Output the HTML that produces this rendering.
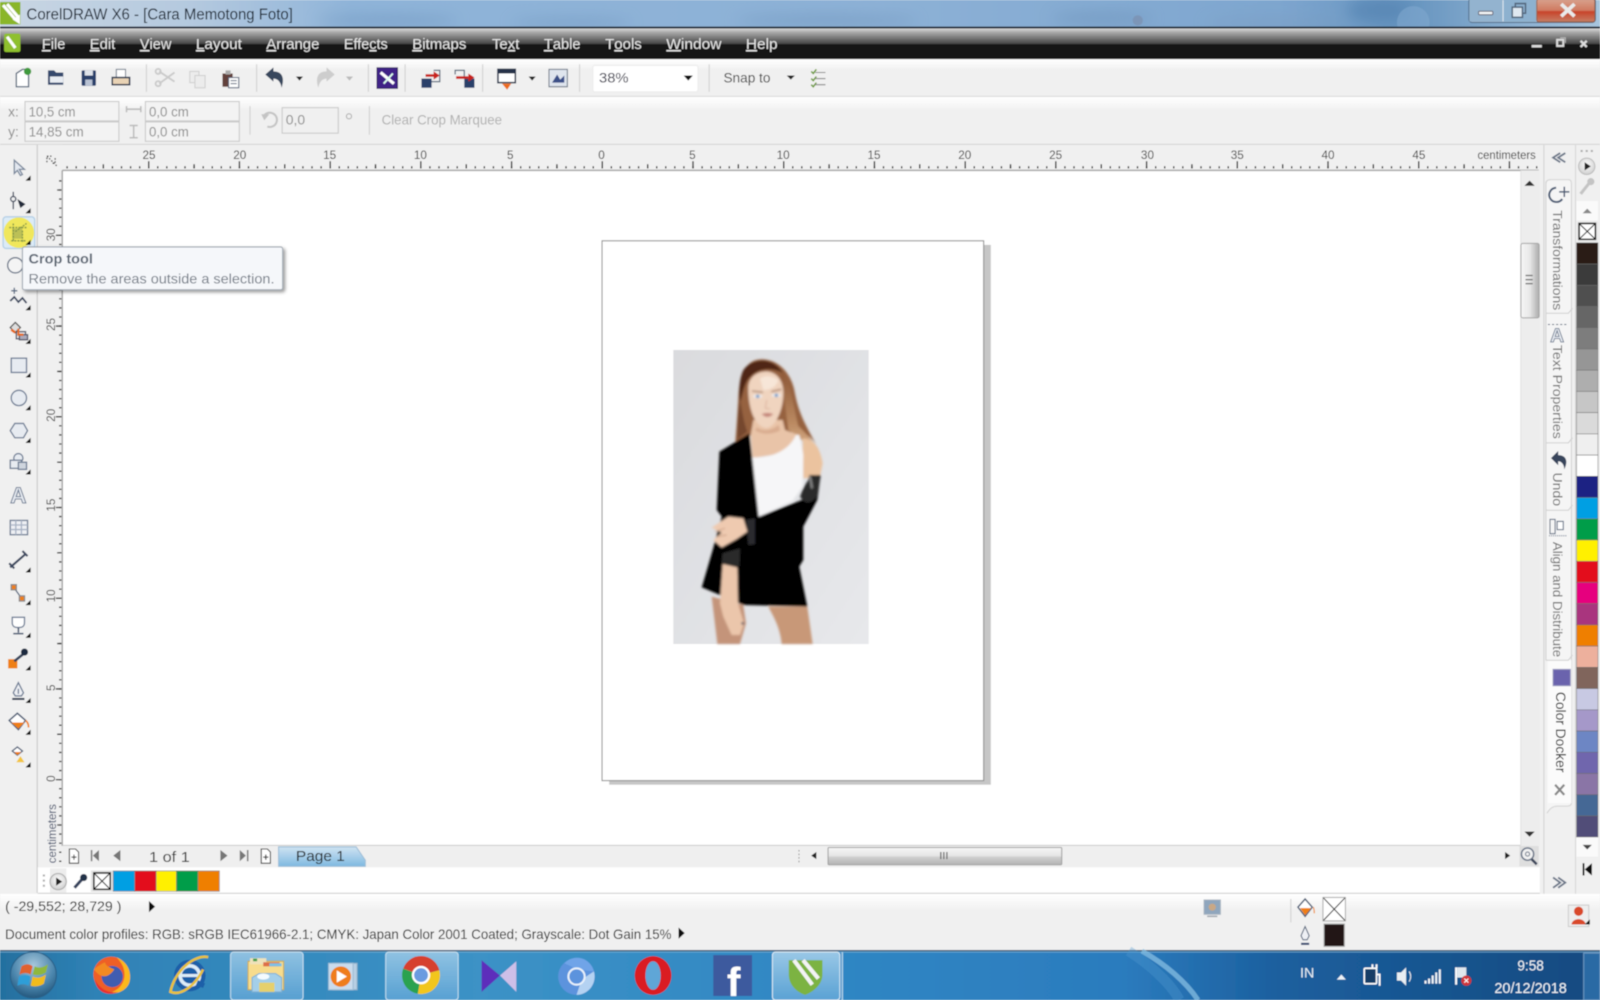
<!DOCTYPE html>
<html><head><meta charset="utf-8"><title>CorelDRAW X6</title>
<style>html,body{margin:0;padding:0;width:1600px;height:1000px;overflow:hidden;background:#f0f0f0}svg{display:block}text{font-family:"Liberation Sans",sans-serif}</style></head>
<body>
<svg xmlns="http://www.w3.org/2000/svg" width="1600" height="1000" viewBox="0 0 1568 980">
<defs>
<linearGradient id="tb" x1="0" x2="1" y1="0" y2="0"><stop offset="0" stop-color="#c9d6e3"/><stop offset=".12" stop-color="#b4c9df"/><stop offset=".22" stop-color="#8fb4d9"/><stop offset=".55" stop-color="#8db1d6"/><stop offset=".8" stop-color="#7ea6cf"/><stop offset=".88" stop-color="#6694bf"/><stop offset="1" stop-color="#a8c5de"/></linearGradient>
<linearGradient id="mb" x1="0" x2="0" y1="0" y2="1"><stop offset="0" stop-color="#d8d8d8"/><stop offset=".12" stop-color="#aaa"/><stop offset=".5" stop-color="#444"/><stop offset=".52" stop-color="#171717"/><stop offset="1" stop-color="#171717"/></linearGradient>
<linearGradient id="bar" x1="0" x2="0" y1="0" y2="1"><stop offset="0" stop-color="#fff"/><stop offset=".3" stop-color="#f0f0f0"/><stop offset="1" stop-color="#f0f0f0"/></linearGradient>
<linearGradient id="thumb" x1="0" x2="0" y1="0" y2="1"><stop offset="0" stop-color="#f6f6f6"/><stop offset=".5" stop-color="#e4e4e4"/><stop offset=".55" stop-color="#cfcfcf"/><stop offset="1" stop-color="#b4b4b4"/></linearGradient>
<linearGradient id="thumbv" x1="0" x2="1" y1="0" y2="0"><stop offset="0" stop-color="#f8f8f8"/><stop offset=".5" stop-color="#e6e6e6"/><stop offset="1" stop-color="#aaa"/></linearGradient>
<linearGradient id="tabg" x1="0" x2="0" y1="0" y2="1"><stop offset="0" stop-color="#cfe3f2"/><stop offset="1" stop-color="#7fb9e0"/></linearGradient>
<linearGradient id="task" x1="0" x2="1" y1="0" y2="0"><stop offset="0" stop-color="#24709f"/><stop offset=".06" stop-color="#2f82b6"/><stop offset=".3" stop-color="#3c92c6"/><stop offset=".53" stop-color="#2f86c3"/><stop offset=".7" stop-color="#2c7cbe"/><stop offset=".8" stop-color="#1b5f9e"/><stop offset="1" stop-color="#164a80"/></linearGradient>
<linearGradient id="act" x1="0" x2="0" y1="0" y2="1"><stop offset="0" stop-color="#9fcbe8" stop-opacity=".95"/><stop offset="1" stop-color="#5fa5d6" stop-opacity=".9"/></linearGradient>
<linearGradient id="close" x1="0" x2="0" y1="0" y2="1"><stop offset="0" stop-color="#d9a38f"/><stop offset=".5" stop-color="#cf7a60"/><stop offset=".55" stop-color="#c8432a"/><stop offset="1" stop-color="#c77f66"/></linearGradient>
<radialGradient id="orb" cx=".5" cy=".3" r=".75"><stop offset="0" stop-color="#a9c8dc"/><stop offset=".6" stop-color="#4b86ad"/><stop offset="1" stop-color="#1d5075"/></radialGradient>
<radialGradient id="btn" cx=".5" cy=".4" r=".6"><stop offset="0" stop-color="#fff"/><stop offset="1" stop-color="#cfcfcf"/></radialGradient>
<linearGradient id="photobg" x1="0" x2="1" y1="0" y2="1"><stop offset="0" stop-color="#dadbde"/><stop offset="1" stop-color="#e7e8eb"/></linearGradient>
<linearGradient id="hairR" x1="0" x2="0" y1="0" y2="1"><stop offset="0" stop-color="#8a5535"/><stop offset=".55" stop-color="#b98860"/><stop offset="1" stop-color="#e8c29f"/></linearGradient>
<filter id="soft" x="-2%" y="-2%" width="104%" height="104%"><feGaussianBlur stdDeviation=".45"/></filter>
<filter id="b3" x="-20%" y="-20%" width="140%" height="140%"><feGaussianBlur stdDeviation="3"/></filter>
<filter id="b8" x="-50%" y="-100%" width="200%" height="300%"><feGaussianBlur stdDeviation="7"/></filter>
<filter id="tip" x="-5%" y="-20%" width="110%" height="140%"><feDropShadow dx="2" dy="2" stdDeviation="1.5" flood-color="#000" flood-opacity=".4"/></filter>
<polygon id="fly" points="7,12 12,12 12,7" fill="#111"/>
</defs>

<rect width="1568" height="980" fill="#f0f0f0"/>
<g filter="url(#soft)">

<!-- title bar -->
<rect width="1568" height="26" fill="url(#tb)"/>
<g filter="url(#b8)" opacity=".6">
<ellipse cx="380" cy="20" rx="70" ry="5" fill="#6e94bc"/><ellipse cx="560" cy="22" rx="60" ry="4" fill="#6e94bc"/><ellipse cx="810" cy="20" rx="90" ry="5" fill="#6e94bc"/><ellipse cx="1080" cy="18" rx="50" ry="6" fill="#6e94bc"/><ellipse cx="1250" cy="22" rx="70" ry="4" fill="#7a9bbf"/><ellipse cx="1350" cy="10" rx="30" ry="12" fill="#4f7fae"/>
</g>
<circle cx="1385" cy="22" r="16" fill="#82a9cf" opacity=".55"/><circle cx="1115" cy="20" r="5" fill="#7b7f98" opacity=".4"/>
<rect y="26" width="1568" height="2" fill="#1f2a3a"/>
<rect x="0" y="2" width="20" height="22" fill="#8ab62c"/><path d="M3 5L15 19M7 4L18 17M15 19L18 17L18 21Z" stroke="#fff" stroke-width="3" fill="none"/>
<text x="26" y="19" font-size="15" fill="#15202e" textLength="261" lengthAdjust="spacingAndGlyphs">CorelDRAW X6 - [Cara Memotong Foto]</text>
<!-- window buttons -->
<rect x="1439.5" y="-2" width="124" height="24" rx="3" fill="#9db8d0" stroke="#4f6a86"/>
<rect x="1440" y="-2" width="33" height="23" fill="#93b3cf"/><rect x="1473" y="-2" width="33" height="23" fill="#8db1cf"/>
<path d="M1473 0V21M1506 0V21" stroke="#e0e8f0"/>
<rect x="1506" y="-1" width="57" height="22.5" rx="2" fill="url(#close)" stroke="#8d6050"/>
<rect x="1449" y="11" width="14" height="3.500" rx="1" fill="#f4f6f8" stroke="#667"/>
<rect x="1482" y="7" width="10" height="10" fill="#dfe8f0" stroke="#52667c" stroke-width="1.500"/><path d="M1485 7V3.500H1495V13H1492" fill="none" stroke="#52667c" stroke-width="1.500"/>
<path d="M1530 4L1543 16M1543 4L1530 16" stroke="#eaeaea" stroke-width="3.600"/>

<!-- menu bar -->
<rect y="28" width="1568" height="30" fill="url(#mb)"/>
<rect x="4" y="33" width="16" height="18" rx="2" fill="#8fc02f"/><path d="M7 36L15 47" stroke="#fff" stroke-width="3"/>
<g font-size="14.5" fill="#e6e6e6">
<text x="41" y="48" textLength="23" lengthAdjust="spacingAndGlyphs"><tspan text-decoration="underline">F</tspan>ile</text>
<text x="88" y="48" textLength="25" lengthAdjust="spacingAndGlyphs"><tspan text-decoration="underline">E</tspan>dit</text>
<text x="137" y="48" textLength="31" lengthAdjust="spacingAndGlyphs"><tspan text-decoration="underline">V</tspan>iew</text>
<text x="192" y="48" textLength="45" lengthAdjust="spacingAndGlyphs"><tspan text-decoration="underline">L</tspan>ayout</text>
<text x="261" y="48" textLength="52" lengthAdjust="spacingAndGlyphs"><tspan text-decoration="underline">A</tspan>rrange</text>
<text x="337" y="48" textLength="43" lengthAdjust="spacingAndGlyphs">Effe<tspan text-decoration="underline">c</tspan>ts</text>
<text x="404" y="48" textLength="53" lengthAdjust="spacingAndGlyphs"><tspan text-decoration="underline">B</tspan>itmaps</text>
<text x="482" y="48" textLength="27" lengthAdjust="spacingAndGlyphs">Te<tspan text-decoration="underline">x</tspan>t</text>
<text x="533" y="48" textLength="36" lengthAdjust="spacingAndGlyphs"><tspan text-decoration="underline">T</tspan>able</text>
<text x="593" y="48" textLength="36" lengthAdjust="spacingAndGlyphs">T<tspan text-decoration="underline">o</tspan>ols</text>
<text x="653" y="48" textLength="54" lengthAdjust="spacingAndGlyphs"><tspan text-decoration="underline">W</tspan>indow</text>
<text x="731" y="48" textLength="31" lengthAdjust="spacingAndGlyphs"><tspan text-decoration="underline">H</tspan>elp</text>
</g>
<rect x="1501" y="44" width="10" height="2.5" fill="#ddd"/>
<rect x="1526" y="39" width="6" height="6" fill="none" stroke="#ddd" stroke-width="2"/><path d="M1529 37H1534V42" fill="none" stroke="#bbb"/>
<path d="M1549 40L1555 46M1555 40L1549 46" stroke="#ddd" stroke-width="2.2"/>

<!-- standard toolbar -->
<rect y="58" width="1568" height="36" fill="url(#bar)"/>
<rect y="94" width="1568" height="1" fill="#d8d8d8"/>
<path d="M16 72L22 68H28V85H16Z" fill="#fff" stroke="#5b6a7e" stroke-width="1.300"/><circle cx="27" cy="70" r="3.600" fill="#3f9a3c"/>
<path d="M47 83V69H53L55 71H62V83Z" fill="#34496d"/><path d="M49 75H62V81H49Z" fill="#e9edf3"/>
<rect x="80" y="69" width="14" height="15" rx="1" fill="#2c3f6b"/><rect x="83" y="69" width="8" height="5" fill="#dfe3ea"/><rect x="83.500" y="78" width="7" height="6" fill="#b9c2d3"/>
<rect x="114" y="68" width="9" height="9" fill="#fff" stroke="#6f7a8a"/><rect x="110" y="76" width="17" height="7" fill="#e9d3b5" stroke="#28354d" stroke-width="1.500"/>
<path d="M143.500 63V90" stroke="#cfcfcf"/>
<g fill="none" stroke="#cacaca" stroke-width="1.800"><path d="M156 70L171 80M156 82L171 71"/><circle cx="155" cy="70" r="2.500"/><circle cx="155" cy="82" r="2.500"/></g>
<g fill="#ececec" stroke="#cfcfcf"><rect x="186" y="70" width="9" height="11"/><rect x="191" y="74" width="10" height="12"/></g>
<rect x="218" y="72" width="10" height="13" fill="#62403a"/><rect x="221" y="69" width="5" height="4" fill="#aaa"/><rect x="224" y="76" width="10" height="10" fill="#fff" stroke="#59647a"/><path d="M226 79H232M226 82H232" stroke="#59647a"/>
<path d="M251.500 63V90" stroke="#cfcfcf"/>
<path d="M260 73L268 66V70C277 70 279 77 276 86C275 80 272 77 268 77V80Z" fill="#39465d"/>
<polygon points="290,75 297,75 293.500,79" fill="#222"/>
<path d="M328 73L320 66V70C311 70 309 77 312 86C313 80 316 77 320 77V80Z" fill="#cdcdcd"/>
<polygon points="339,75 346,75 342.500,79" fill="#bbb"/>
<path d="M361 63V90" stroke="#cfcfcf"/>
<rect x="369.500" y="66.500" width="20" height="20" fill="#3f2387" stroke="#2c1a60"/><path d="M373 71L386 82" stroke="#fff" stroke-width="3"/><path d="M376 82L385 72" stroke="#dfe" stroke-width="1.800"/>
<path d="M397 63V90" stroke="#cfcfcf"/>
<path d="M425 69H431V80H416" fill="none" stroke="#5b6a7e" stroke-width="1.200"/><rect x="413" y="77" width="10" height="9" fill="#2c3f6b"/><path d="M417 74H427" stroke="#c8201e" stroke-width="2.500"/><polygon points="425,70 431,74 425,78" fill="#c8201e"/>
<path d="M446 73V69H455V76" fill="none" stroke="#5b6a7e" stroke-width="1.200"/><rect x="455" y="77" width="10" height="9" fill="#2c3f6b"/><path d="M447 76H459" stroke="#c8201e" stroke-width="2.500"/><polygon points="459,72 465,76 459,80" fill="#c8201e"/>
<path d="M473 63V90" stroke="#cfcfcf"/>
<rect x="488" y="68" width="17" height="13" fill="#fff" stroke="#263349" stroke-width="1.500"/><rect x="488" y="68" width="17" height="4" fill="#263349"/><polygon points="492,82 501,82 497,88" fill="#ec6c1f"/>
<polygon points="518,75 525,75 521.500,79" fill="#222"/>
<rect x="538" y="68" width="18" height="17" fill="#dfe5ee" stroke="#6a7484"/><path d="M541 81L546 73L549 78L553 74V81Z" fill="#3b4f88"/>
<path d="M568 63V90" stroke="#cfcfcf"/>
<rect x="581" y="64" width="103" height="26" rx="2" fill="#fff" stroke="#ececec"/>
<text x="587" y="81" font-size="14" fill="#334" textLength="29" lengthAdjust="spacingAndGlyphs">38%</text>
<polygon points="670,74 679,74 674.500,79" fill="#111"/>
<path d="M695 63V90" stroke="#cfcfcf"/>
<text x="709" y="81" font-size="14" fill="#444" textLength="46" lengthAdjust="spacingAndGlyphs">Snap to</text>
<polygon points="771,74 779,74 775,78" fill="#222"/>
<path d="M795 70L797 72L800 68M795 77L797 79L800 75M795 83L797 85L800 81" fill="none" stroke="#6c9c38" stroke-width="1.500"/><path d="M799 71H809M799 77H809M799 83H809" stroke="#888"/>

<!-- property bar -->
<rect y="95" width="1568" height="46" fill="url(#bar)"/>
<rect y="141" width="1568" height="1" fill="#d2d2d2"/>
<text x="8" y="114" font-size="13.500" fill="#8a8a8a">x:</text>
<text x="8" y="134" font-size="13.500" fill="#8a8a8a">y:</text>
<g fill="#f3f3f3" stroke="#c8c8c8"><rect x="24.500" y="99.500" width="92" height="19"/><rect x="24.500" y="119.500" width="92" height="19"/><rect x="142.500" y="99.500" width="92" height="19"/><rect x="142.500" y="119.500" width="92" height="19"/><rect x="276.500" y="105.500" width="55" height="25" fill="#f0f0f0"/></g>
<g font-size="13.500" fill="#8d8d8d">
<text x="28" y="114" textLength="46" lengthAdjust="spacingAndGlyphs">10,5 cm</text>
<text x="28" y="134" textLength="54" lengthAdjust="spacingAndGlyphs">14,85 cm</text>
<text x="146" y="114" textLength="39" lengthAdjust="spacingAndGlyphs">0,0 cm</text>
<text x="146" y="134" textLength="39" lengthAdjust="spacingAndGlyphs">0,0 cm</text>
<text x="280" y="122" textLength="19" lengthAdjust="spacingAndGlyphs">0,0</text>
</g>
<path d="M124 107H138M124 104V110M138 104V110" stroke="#bbb" stroke-width="1.500" fill="none"/>
<path d="M131 123V135M127 123H135M127 135H135" stroke="#bbb" stroke-width="1.500" fill="none"/>
<path d="M259 113A7 7 0 1 1 262 124" fill="none" stroke="#c4c4c4" stroke-width="2"/><polygon points="256,112 264,112 259,118" fill="#c4c4c4"/>
<circle cx="342" cy="114" r="2.500" fill="none" stroke="#aaa"/>
<path d="M245 104V132M362 104V132" stroke="#cfcfcf"/>
<text x="374" y="122" font-size="13.500" fill="#b0b0b0" textLength="118" lengthAdjust="spacingAndGlyphs">Clear Crop Marquee</text>

<!-- canvas -->
<rect x="61" y="167" width="1430" height="662" fill="#fff"/>
<!-- page -->
<rect x="597" y="240" width="374" height="529" fill="#c6c6c6"/>
<rect x="590" y="236" width="374" height="529" fill="#fff" stroke="#8c8c8c"/>

<!-- photo -->
<g transform="translate(646.800,333.200) scale(.32667)">
<rect x="40" y="30" width="586" height="882" fill="url(#photobg)"/>
<g filter="url(#b3)">
<path d="M300 58C255 60 238 110 235 170C232 230 228 280 226 305L275 285L420 275C445 285 465 300 478 335C455 280 420 240 405 160C395 95 350 55 300 58Z" fill="#96623f"/>
<path d="M362 88C395 130 400 200 415 258C445 288 472 312 486 372L432 305C405 285 395 275 385 270Z" fill="url(#hairR)"/>
<path d="M250 90C275 52 342 50 368 98C330 80 290 85 264 118C250 140 246 170 240 190C235 150 238 115 250 90Z" fill="#4f2819"/>
<path d="M240 175C245 210 252 250 262 275L232 298C232 255 233 215 240 175Z" fill="#74462e"/>
<path d="M280 240L368 240L375 270L415 285L428 330L278 354L272 285Z" fill="#e9c4a8"/>
<path d="M265 140C268 105 300 92 325 95C355 100 370 125 370 160C370 200 352 258 320 264C288 262 264 215 265 140Z" fill="#f0d4bf"/>
<path d="M300 115Q325 100 355 120Q345 150 310 150Z" fill="#f7e6d8"/>
<path d="M290 262Q320 282 356 255L360 272Q320 290 286 272Z" fill="#d9ac8f"/>
<ellipse cx="293" cy="169" rx="14" ry="5" fill="#eef0f2"/><ellipse cx="349" cy="166" rx="14" ry="5" fill="#eef0f2"/>
<circle cx="293" cy="169" r="5" fill="#5f93c6"/><circle cx="349" cy="166" r="5" fill="#5f93c6"/>
<path d="M276 153L309 157M334 155L364 148" stroke="#a2775e" stroke-width="4"/>
<path d="M320 180L316 205L330 207" stroke="#d8b09a" stroke-width="3" fill="none"/>
<path d="M305 222Q322 215 340 222Q322 240 305 222Z" fill="#c5867a"/>
<path d="M428 295C458 295 480 320 488 370L480 410L430 415Z" fill="#ebc39f"/>
<path d="M408 285L418 285L430 345L428 440L398 482L296 530L276 352C330 355 385 335 408 285Z" fill="#f6f6f8"/>
<path d="M155 770L250 795L258 850L240 912H172Z" fill="#c4947a"/>
<path d="M325 800H442L458 912H365C360 860 340 830 325 800Z" fill="#c89878"/>
<path d="M178 335L268 280L277 355L296 530L430 478L440 440L448 405L482 405L472 480L430 560L430 660L418 680L442 800L250 795L125 742L160 622L185 530L170 510Z" fill="#060606"/>
<path d="M420 470C430 440 440 420 465 405L482 410L470 470C455 490 435 495 420 470Z" fill="#2a2a2c"/>
<path d="M450 408L456 445" stroke="#999" stroke-width="5"/>
<path d="M258 540L285 535L285 612L265 615Z" fill="#2c2c2e"/>
<path d="M188 640L240 625L238 680L185 670Z" fill="#2a2a2c"/>
<path d="M155 563L205 530L250 535L262 575L230 597L185 622L160 600L185 578Z" fill="#efcab0"/>
<path d="M165 575L195 565M170 590L200 585" stroke="#c59a80" stroke-width="3"/>
<path d="M188 672L232 682L234 790L252 850L240 885L215 885L190 830L180 790Z" fill="#ebc6ab"/>
<circle cx="248" cy="850" r="4" fill="#556"/>
</g>
</g>

<!-- rulers bg -->
<rect x="37" y="142" width="1471" height="25" fill="#f0f0f0"/>
<rect x="37" y="142" width="24" height="707" fill="#f0f0f0"/>
<rect x="0" y="142" width="36" height="790" fill="#f0f0f0"/>
<rect x="36" y="142" width="1" height="733" fill="#c4c4c4"/>
<path d="M61 167H1508" stroke="#a8a8a8" stroke-width="1.500"/>
<path d="M61 167V829" stroke="#a8a8a8" stroke-width="1.500"/>
<g stroke="#222" fill="none">
<line x1="65.090" y1="164" x2="1507" y2="164" stroke-width="2.200" stroke-dasharray="1.300 7.590"/>
<line x1="100.650" y1="163" x2="1507" y2="163" stroke-width="4" stroke-dasharray="1.300 87.600"/>
<line x1="145.100" y1="161.500" x2="1507" y2="161.500" stroke-width="7" stroke-dasharray="1.300 87.600"/>
<line x1="59" y1="176.660" x2="59" y2="846" stroke-width="2.200" stroke-dasharray="1.300 7.590"/>
<line x1="58" y1="185.550" x2="58" y2="846" stroke-width="4" stroke-dasharray="1.300 87.600"/>
<line x1="57.500" y1="230" x2="57.500" y2="846" stroke-width="5.500" stroke-dasharray="1.300 87.600"/>
</g>
<g font-size="11.500" fill="#3d3d3d" text-anchor="middle">
<text x="146" y="156">25</text><text x="235" y="156">20</text><text x="323" y="156">15</text><text x="412" y="156">10</text><text x="500" y="156">5</text><text x="589.500" y="156">0</text><text x="678.500" y="156">5</text><text x="767.500" y="156">10</text><text x="856.500" y="156">15</text><text x="945.500" y="156">20</text><text x="1034.500" y="156">25</text><text x="1124.500" y="156">30</text><text x="1212.500" y="156">35</text><text x="1301.500" y="156">40</text><text x="1390.500" y="156">45</text>
<text transform="translate(54,230) rotate(-90)">30</text><text transform="translate(54,318) rotate(-90)">25</text><text transform="translate(54,407) rotate(-90)">20</text><text transform="translate(54,495) rotate(-90)">15</text><text transform="translate(54,584) rotate(-90)">10</text><text transform="translate(54,674) rotate(-90)">5</text><text transform="translate(54,763) rotate(-90)">0</text>
</g>
<text x="1448" y="156" font-size="11.500" fill="#3d3d3d" textLength="57" lengthAdjust="spacingAndGlyphs">centimeters</text>
<text transform="translate(55,846) rotate(-90)" font-size="11.500" fill="#3d4a66" textLength="58" lengthAdjust="spacingAndGlyphs">centimeters</text>
<path d="M46 153L56 163M46 159L46 153L52 153M54 155L54 160L50 160" stroke="#333" stroke-dasharray="1.500 1.500" fill="none" stroke-width="1.200"/>

<!-- toolbox -->
<g stroke-width="1.300">
<g transform="translate(18,165)"><path d="M-4 -8L-4 5L-1 2L2 7L4 6L1 1L6 1Z" fill="#e3e8f0" stroke="#7a889c"/><use href="#fly"/></g>
<g transform="translate(18,197)"><path d="M-5 -9V8" stroke="#444e60" fill="none"/><circle cx="-5" cy="-2" r="2.500" fill="#eee" stroke="#444e60"/><polygon points="-1,-2 7,3 2,7" fill="#222b3b"/><use href="#fly"/></g>
<g transform="translate(18,228)"><rect x="-15" y="-15.500" width="31" height="31" rx="3" fill="#dcebf7" stroke="#b5d0e6"/><circle cx="0.500" r="15" fill="#f0e75c"/><rect x="-6" y="-4" width="10" height="10" fill="#bcc057"/><path d="M-9 -5H8M-5 -9V8M4 -2V9M-7 8H8M-3 -1L8 -9" stroke="#7f9448" fill="none" stroke-dasharray="2 1"/><use href="#fly"/></g>
<circle cx="15" cy="260" r="7.500" fill="#f4f4f4" stroke="#6b7688"/>
<g transform="translate(18,292)"><path d="M-7 -7H-1M-4 -10V-4" stroke="#5a6a82"/><path d="M-8 3L-4 -1L0 4L4 0L8 5" fill="none" stroke="#3d4860" stroke-width="1.800"/><use href="#fly"/></g>
<g transform="translate(18,325)"><path d="M-8 -4L-3 -9L2 -4L-3 1Z" fill="#ddd" stroke="#555"/><path d="M-7 -2L-3 1" stroke="#e66b1f" stroke-width="2.500"/><rect x="-2" y="0" width="9" height="7" fill="#e3e6ea" stroke="#556"/><rect x="1" y="3" width="8" height="5" fill="#aab" stroke="#556"/><path d="M0 -3V3H5" stroke="#e66b1f" stroke-width="2" fill="none"/><use href="#fly"/></g>
<g transform="translate(18,358)"><rect x="-7" y="-7" width="15" height="14" fill="#e7ebf1" stroke="#6e7d94"/><use href="#fly"/></g>
<g transform="translate(18,390)"><circle cx="0.500" r="7.500" fill="#e7ebf1" stroke="#6e7d94"/><use href="#fly"/></g>
<g transform="translate(18,422)"><polygon points="-8,0 -3.500,-7 5,-7 9,0 5,7 -3.500,7" fill="#e7ebf1" stroke="#6e7d94"/><use href="#fly"/></g>
<g transform="translate(18,453)"><circle cx="0" cy="-4" r="4.500" fill="#e7ebf1" stroke="#6e7d94"/><rect x="-8" y="-2" width="11" height="8" fill="#e7ebf1" stroke="#6e7d94"/><rect x="0" y="0" width="8" height="7" fill="#cfd5de" stroke="#6e7d94"/><use href="#fly"/></g>
<text x="18" y="493" font-size="22" font-weight="bold" text-anchor="middle" fill="#e7ebf1" stroke="#6e7d94" stroke-width="1">A</text>
<g transform="translate(18,517)"><rect x="-8" y="-7" width="17" height="14" fill="#eef0f4" stroke="#6e7d94"/><path d="M-8 -2.500H9M-8 2H9M-2.500 -7V7M3 -7V7" stroke="#a8b2c4"/></g>
<g transform="translate(18,549)"><path d="M-8 7L7 -6" stroke="#3d4860" stroke-width="2.200"/><path d="M-9 3L-4 8M4 -9L9 -4" stroke="#3d4860" stroke-width="2"/><use href="#fly"/></g>
<g transform="translate(18,581)"><path d="M-5 -6L3 5" stroke="#5a6a82"/><rect x="-7" y="-8" width="5" height="5" fill="#ef7f12" stroke="#888"/><rect x="1" y="3" width="5" height="5" fill="#ef7f12" stroke="#888"/><use href="#fly"/></g>
<g transform="translate(18,613)"><path d="M-6 -8H6V-3C6 2 2 2 0 2C-2 2 -6 2 -6 -3Z" fill="#fff" stroke="#6e7d94"/><path d="M0 2V7M-5 8H5" stroke="#4e5d76" stroke-width="1.600"/><use href="#fly"/></g>
<g transform="translate(18,645)"><rect x="-10" y="1" width="9" height="9" fill="#ef7f12"/><path d="M-4 3L6 -5" stroke="#38445c" stroke-width="2.600"/><circle cx="6" cy="-6" r="3.500" fill="#1f2a40"/><use href="#fly"/></g>
<g transform="translate(18,677)"><path d="M0 -8L5 2L3 5H-3L-5 2Z" fill="#eef0f4" stroke="#6e7d94"/><path d="M0 -2V3" stroke="#6e7d94"/><path d="M-6 8H6" stroke="#28354d" stroke-width="2"/><use href="#fly"/></g>
<g transform="translate(18,708)"><path d="M-9 -2L-1 -9L7 -2L0 7Z" fill="#fff" stroke="#4e5d76" stroke-width="1.500"/><path d="M-7 0H6L0 6Z" fill="#ef7f12"/><path d="M7 -2C10 0 10 3 10 5" stroke="#ef7f12" stroke-width="1.600" fill="none"/><use href="#fly"/></g>
<g transform="translate(18,740)"><path d="M-6 -4L-1 -8L4 -4L-1 0Z" fill="#fff" stroke="#4e5d76"/><path d="M-4 -3H3L-1 0Z" fill="#ef7f12"/><path d="M-2 7L2 1L6 7Z" fill="#f3c440"/><use href="#fly"/></g>
</g>

<!-- tooltip -->
<rect x="22" y="242" width="255" height="42" rx="2" fill="#f5f7fa" stroke="#9aa3ad" filter="url(#tip)"/>
<text x="28" y="258" font-size="14" font-weight="bold" fill="#5c6673" textLength="63" lengthAdjust="spacingAndGlyphs">Crop tool</text>
<text x="28" y="278" font-size="14" fill="#737b86" textLength="241" lengthAdjust="spacingAndGlyphs">Remove the areas outside a selection.</text>

<!-- page nav row -->
<rect x="61" y="829" width="1430" height="21" fill="#efefef"/>
<path d="M61 828.500H1491" stroke="#c9c9c9"/>
<g fill="#fff" stroke="#333"><path d="M68 832H74L77 835V846H68Z"/><path d="M256 832H262L265 835V846H256Z"/></g>
<path d="M70 840H75M72.500 837.500V842.500M258 840H263M260.500 837.500V842.500" stroke="#111"/>
<g fill="#777"><rect x="89" y="833" width="1.500" height="11"/><polygon points="97,833 91,838.500 97,844"/><polygon points="118,833 111,838.500 118,844"/><polygon points="216,833 223,838.500 216,844"/><polygon points="235,833 241,838.500 235,844"/><rect x="242" y="833" width="1.500" height="11"/></g>
<text x="146" y="845" font-size="14.500" fill="#333" textLength="40" lengthAdjust="spacingAndGlyphs">1 of 1</text>
<path d="M273 849V830H349L358 843V849Z" fill="url(#tabg)" stroke="#9dbed8"/>
<text x="290" y="844" font-size="14.500" fill="#222" textLength="48" lengthAdjust="spacingAndGlyphs">Page 1</text>
<path d="M783 833V846" stroke="#888" stroke-dasharray="1.500 2"/>
<polygon points="800,835 795,838.500 800,842" fill="#222"/>
<rect x="811.500" y="830.500" width="229" height="17" rx="1" fill="url(#thumb)" stroke="#9f9f9f"/>
<path d="M922 835V842M925 835V842M928 835V842" stroke="#666" stroke-width="1.200"/>
<polygon points="1475,835 1480,838.500 1475,842" fill="#222"/>
<rect x="1489" y="829" width="19" height="20" fill="#dedede"/><circle cx="1497" cy="837" r="6" fill="#f1f1f1" stroke="#6b7688" stroke-width="1.500"/><circle cx="1497" cy="837" r="2" fill="none" stroke="#6b7688"/><path d="M1501 842L1506 847" stroke="#3c465c" stroke-width="2.500"/>

<!-- doc palette row -->
<rect x="37" y="850" width="1475" height="25" fill="#fff"/>
<rect x="49" y="851" width="16" height="24" fill="#ededed"/>
<path d="M43 857V870" stroke="#aaa" stroke-width="2" stroke-dasharray="2 3"/>
<circle cx="57" cy="864" r="8" fill="url(#btn)" stroke="#aaa"/><polygon points="55,860 61,864 55,868" fill="#222"/>
<path d="M73 870L81 861" stroke="#37445e" stroke-width="3"/><circle cx="82" cy="860" r="3.500" fill="#22304a"/>
<rect x="89" y="853" width="22" height="21" fill="#e3e3e3"/>
<rect x="92" y="855.500" width="16" height="16" fill="#fff" stroke="#111" stroke-width="1.500"/><path d="M92 855.500L108 871.500M108 855.500L92 871.500" stroke="#111"/>
<g stroke="#777" stroke-width=".6"><rect x="111" y="853.500" width="21" height="20" fill="#009fe3"/><rect x="132" y="853.500" width="21" height="20" fill="#e30a1c"/><rect x="153" y="853.500" width="20" height="20" fill="#fff000"/><rect x="173" y="853.500" width="21" height="20" fill="#009d4a"/><rect x="194" y="853.500" width="21" height="20" fill="#ef7f00"/></g>
<rect x="37" y="875" width="1476" height="1" fill="#cacaca"/>

<!-- vertical scrollbar -->
<rect x="1490" y="167" width="19" height="662" fill="#ededed"/>
<rect x="1490" y="167" width=".8" height="662" fill="#dedede"/>
<polygon points="1494,182 1504,182 1499,177" fill="#333"/>
<rect x="1490.500" y="238.500" width="18" height="73" rx="2" fill="url(#thumbv)" stroke="#a4a4a4"/>
<path d="M1495 270H1502M1495 274H1502M1495 278H1502" stroke="#666" stroke-width="1.200"/>
<polygon points="1494,815 1504,815 1499,820" fill="#333"/>

<!-- docker column -->
<rect x="1509" y="142" width="35" height="790" fill="#f0f0f0"/>
<path d="M1513 142V876" stroke="#d2d2d2"/>
<path d="M1529 150L1522 154.500L1529 159M1534 150L1527 154.500L1534 159" fill="none" stroke="#6b7688" stroke-width="1.800"/>
<path d="M1515 180Q1515 176 1520 176H1537Q1540 176 1540 180V787Q1540 790 1536 790H1526Q1520 790 1516 797" fill="#f5f5f5" stroke="#d3d3d3"/>
<rect x="1517" y="647" width="23" height="140" fill="#fbfbfb"/>
<path d="M1515 307H1537L1541 302M1515 434H1537L1541 429M1515 500H1537L1541 495M1515 647H1537L1541 642" fill="none" stroke="#d0d0d0"/>
<path d="M1515 178V647" stroke="#d0d0d0"/>
<path d="M1531 195A7 7 0 1 1 1525 184" fill="none" stroke="#4e5d76" stroke-width="2"/>
<path d="M1533 183V193M1528 188H1538" stroke="#4e5d76" stroke-width="1.500"/>
<text x="1526" y="335" font-size="19" font-weight="bold" text-anchor="middle" fill="#e7ebf1" stroke="#5a6a82" stroke-width=".8">A</text>
<path d="M1517 318H1535" stroke="#4e5d76" stroke-dasharray="2 2"/>
<path d="M1520 449L1527 442V446C1535 446 1537 452 1533 460C1533 455 1530 452 1527 452V456Z" fill="#38445c"/>
<rect x="1519" y="509" width="5" height="14" fill="none" stroke="#5c6a80"/><path d="M1526 511H1532V519H1526Z" fill="#fff" stroke="#5c6a80"/><path d="M1518 525H1535" stroke="#5c6a80" stroke-dasharray="1 1"/>
<g font-size="13" fill="#6b6b6b">
<text transform="translate(1522,206) rotate(90)" textLength="98" lengthAdjust="spacingAndGlyphs">Transformations</text>
<text transform="translate(1522,338) rotate(90)" textLength="92" lengthAdjust="spacingAndGlyphs">Text Properties</text>
<text transform="translate(1522,463) rotate(90)" textLength="33" lengthAdjust="spacingAndGlyphs">Undo</text>
<text transform="translate(1522,531) rotate(90)" textLength="113" lengthAdjust="spacingAndGlyphs">Align and Distribute</text>
</g>
<rect x="1522" y="656" width="17" height="16" fill="#6a63ad" stroke="#9b9bc0"/>
<text transform="translate(1525,678) rotate(90)" font-size="13.500" fill="#111" textLength="79" lengthAdjust="spacingAndGlyphs">Color Docker</text>
<path d="M1524 769L1533 779M1533 769L1524 779" stroke="#888" stroke-width="2.200"/>
<path d="M1522 860L1529 865L1522 870M1527 860L1534 865L1527 870" fill="none" stroke="#6b7688" stroke-width="1.800"/>

<!-- palette column -->
<rect x="1544" y="142" width="24" height="790" fill="#f0f0f0"/>
<path d="M1544 142V876" stroke="#d6d6d6"/>
<path d="M1549 148H1562" stroke="#aaa" stroke-width="2" stroke-dasharray="2 3"/>
<circle cx="1555" cy="163" r="8" fill="url(#btn)" stroke="#bbb"/><polygon points="1553,159 1559,163 1553,167" fill="#222"/>
<path d="M1549 190L1557 180" stroke="#c4c4c4" stroke-width="3"/><circle cx="1559" cy="178" r="3.500" fill="#c4c4c4"/>
<rect x="1545" y="197" width="21" height="19" fill="#fafafa"/>
<polygon points="1551,209 1560,209 1555.500,204.500" fill="#888"/>
<rect x="1546" y="217" width="20" height="20" fill="#e8e8e8"/>
<rect x="1547.500" y="219" width="16" height="15.500" fill="#fff" stroke="#111" stroke-width="1.500"/><path d="M1547.500 219L1563.500 234.500M1563.500 219L1547.500 234.500" stroke="#111"/>
<g stroke="#6c6c6c" stroke-width=".5">
<rect x="1545" y="238" width="21" height="20.800" fill="#2a1a17"/><rect x="1545" y="258.800" width="21" height="20.800" fill="#3a3a3a"/><rect x="1545" y="279.600" width="21" height="20.800" fill="#505050"/><rect x="1545" y="300.400" width="21" height="20.800" fill="#666"/><rect x="1545" y="321.200" width="21" height="20.800" fill="#7d7d7d"/><rect x="1545" y="342" width="21" height="20.800" fill="#969696"/><rect x="1545" y="362.800" width="21" height="20.800" fill="#aeaeae"/><rect x="1545" y="383.600" width="21" height="20.800" fill="#c6c6c6"/><rect x="1545" y="404.400" width="21" height="20.800" fill="#dadada"/><rect x="1545" y="425.200" width="21" height="20.800" fill="#efefef"/><rect x="1545" y="446" width="21" height="20.800" fill="#fff"/><rect x="1545" y="466.800" width="21" height="20.800" fill="#1c2283"/><rect x="1545" y="487.600" width="21" height="20.800" fill="#009fe3"/><rect x="1545" y="508.400" width="21" height="20.800" fill="#009d4a"/><rect x="1545" y="529.200" width="21" height="20.800" fill="#fff000"/><rect x="1545" y="550" width="21" height="20.800" fill="#e30a1c"/><rect x="1545" y="570.800" width="21" height="20.800" fill="#e6007e"/><rect x="1545" y="591.600" width="21" height="20.800" fill="#a9347e"/><rect x="1545" y="612.400" width="21" height="20.800" fill="#ef7f00"/><rect x="1545" y="633.200" width="21" height="20.800" fill="#edb09d"/><rect x="1545" y="654" width="21" height="20.800" fill="#80655c"/><rect x="1545" y="674.800" width="21" height="20.800" fill="#c8c9e3"/><rect x="1545" y="695.600" width="21" height="20.800" fill="#a598c9"/><rect x="1545" y="716.400" width="21" height="20.800" fill="#6d86c4"/><rect x="1545" y="737.200" width="21" height="20.800" fill="#7066ad"/><rect x="1545" y="758" width="21" height="20.800" fill="#8a74a6"/><rect x="1545" y="778.800" width="21" height="20.800" fill="#446895"/><rect x="1545" y="799.600" width="21" height="20.800" fill="#514d78"/>
</g>
<rect x="1545" y="820.500" width="21" height="19" fill="#fafafa"/>
<polygon points="1551,828 1560,828 1555.500,832.500" fill="#444"/>
<rect x="1551" y="846" width="1.800" height="12" fill="#111"/><polygon points="1560,846 1553,852 1560,858" fill="#111"/>

<!-- status bar -->
<rect y="876" width="1568" height="55" fill="url(#bar)"/>
<text x="5" y="893" font-size="14" fill="#222" textLength="114" lengthAdjust="spacingAndGlyphs">( -29,552; 28,729 )</text>
<polygon points="146,883 146,894 152,888.500" fill="#111"/>
<text x="5" y="920" font-size="14" fill="#222" textLength="653" lengthAdjust="spacingAndGlyphs">Document color profiles: RGB: sRGB IEC61966-2.1; CMYK: Japan Color 2001 Coated; Grayscale: Dot Gain 15%</text>
<polygon points="665,909 665,920 671,914.500" fill="#111"/>
<rect x="1180" y="882" width="16" height="14" fill="#8fa6bd" stroke="#a8b4c0"/><circle cx="1188" cy="889" r="3.500" fill="#c9a886"/><path d="M1183 898H1193" stroke="#a0a8b0" stroke-width="1.500"/>
<path d="M1265 881V904" stroke="#d0d0d0"/>
<path d="M1272 889L1279 881L1286 889L1279 898Z" fill="#fff" stroke="#4e5d76" stroke-width="1.400"/><path d="M1274 890H1285L1279 897Z" fill="#ef7f12"/><path d="M1287 889C1288 891 1288 893 1288 895" stroke="#ef7f12" fill="none"/>
<rect x="1296.500" y="879.500" width="22" height="23" fill="#fff" stroke="#aaa"/><path d="M1297 880L1318 902M1318 880L1297 902" stroke="#222"/>
<path d="M1279 908L1283 917L1281 921H1277L1275 917Z" fill="#eef0f4" stroke="#4e5d76"/><path d="M1275 925H1283" stroke="#2c3f6b" stroke-width="2"/>
<rect x="1297.500" y="905.500" width="20" height="22" fill="#231815" stroke="#aaa"/>
<rect x="1537" y="887" width="20" height="21" fill="#eee" stroke="#ccc"/><circle cx="1547" cy="893" r="4.500" fill="#d9492c"/><path d="M1540 906C1541 899 1553 899 1554 906Z" fill="#d9492c"/><polygon points="1553,906 1558,906 1558,901" fill="#111"/>

<!-- taskbar -->
<rect y="931" width="1568" height="49" fill="url(#task)"/>
<rect y="931" width="1568" height="1.500" fill="#3a5a78"/>
<rect y="932.500" width="1568" height="1" fill="#7fb6dc" opacity=".7"/>
<path d="M1119 932C1142 945 1162 962 1174 980" stroke="#8cc3e6" stroke-width="5" fill="none" opacity=".7"/>
<path d="M1106 932C1126 945 1146 962 1156 980" stroke="#4f9ad2" stroke-width="10" fill="none" opacity=".35"/>
<!-- orb -->
<circle cx="32.700" cy="955.500" r="22.500" fill="url(#orb)" stroke="#2a5f86"/>
<path d="M21 947Q27 943 32 947L30 955Q25 952 19 955Z" fill="#e0622f"/><path d="M34 947Q40 950 47 945L45 953Q39 957 32 955Z" fill="#8fb83e"/><path d="M18.500 957Q25 954 30 957L28 966Q23 963 17 966Z" fill="#2d9ed8"/><path d="M32 957Q38 960 45 955L43 964Q37 968 30 966Z" fill="#f1bb1c"/>
<!-- firefox -->
<circle cx="109" cy="955" r="17.500" fill="#ee5f25"/><circle cx="110" cy="957" r="10.500" fill="#3f5db0"/>
<path d="M92 950C98 958 105 960 112 950C107 948 103 946 103 943C99 945 95 947 92 950Z" fill="#f28a23"/>
<path d="M114 938C125 943 129 952 127 962C125 970 115 975 107 973C116 971 122 964 122 955C122 948 119 943 114 938Z" fill="#fbb81c"/>
<path d="M93 960C98 970 108 974 116 972C106 977 94 972 93 960Z" fill="#e8332d"/>
<!-- IE -->
<circle cx="186" cy="956" r="15.500" fill="#1f5fa8"/><circle cx="186" cy="956" r="9.500" fill="none" stroke="#dcecf8" stroke-width="3.500"/><path d="M176 956H196" stroke="#dcecf8" stroke-width="3"/><path d="M193 963L200 966" stroke="#1f5fa8" stroke-width="5"/>
<path d="M204 938C190 935 171 952 167 972C176 976 190 968 199 950" fill="none" stroke="#e9c23e" stroke-width="2.500"/>
<!-- explorer -->
<rect x="226" y="933" width="71" height="47" rx="3" fill="url(#act)" stroke="#d4e8f5" opacity=".9"/>
<path d="M243 942H278V970H243Z" fill="#f7dc8d" stroke="#c4a85a"/><rect x="245" y="939" width="16" height="6" fill="#eee2bb"/><rect x="248" y="939.500" width="4" height="2.500" fill="#3c9c46"/><rect x="258" y="943" width="16" height="4" fill="#d85b3a" opacity=".85"/><rect x="264" y="944" width="12" height="3" fill="#7ec1e6"/>
<path d="M247 958L254 954H270L276 958V972H247Z" fill="#a4cfe9" stroke="#7fb0d2"/><rect x="254" y="963" width="15" height="9" fill="#e6d06d"/><ellipse cx="258" cy="957" rx="6" ry="3" fill="#f4fbff"/>
<!-- media -->
<rect x="326" y="944" width="24" height="26" fill="#b8cfe3" stroke="#8fb0c9"/><rect x="322" y="944" width="24" height="26" fill="#cadced" stroke="#9cbcd4"/><circle cx="334" cy="957" r="10" fill="#ef7d1a"/><polygon points="330,951 340,957 330,963" fill="#fff"/>
<!-- chrome -->
<rect x="378" y="933" width="71" height="47" rx="3" fill="url(#act)" stroke="#d4e8f5" opacity=".9"/>
<path d="M412.600 955.600L395.100 949.200A18.600 18.600 0 0 1 430.600 950.800Z" fill="#d6402f"/>
<path d="M412.600 955.600L430.600 950.800A18.600 18.600 0 0 1 409.400 973.900Z" fill="#f2c61f"/>
<path d="M412.600 955.600L409.400 973.900A18.600 18.600 0 0 1 395.100 949.200Z" fill="#2ca24f"/>
<circle cx="412.600" cy="955.600" r="9" fill="#fff"/><circle cx="412.600" cy="955.600" r="6.800" fill="#6b9be0"/>
<!-- kotlin-like -->
<polygon points="472,941 490,956 472,972" fill="#5d2dbb"/><polygon points="506,942 506,972 490,956" fill="#cdbfe8"/>
<!-- chromium -->
<circle cx="565" cy="957" r="18" fill="#5c93dd"/><path d="M553 944A17 17 0 0 1 582 952L566 950Z" fill="#6fa4e8"/><path d="M565 975A18 18 0 0 0 582 952L570 960Z" fill="#b4d2f2"/><circle cx="565" cy="957" r="9" fill="#e8f1fb"/><circle cx="565" cy="957" r="7" fill="#5c93dd"/>
<!-- opera -->
<ellipse cx="640" cy="956" rx="18" ry="19" fill="#da1a23"/><ellipse cx="640" cy="956" rx="7.500" ry="14" fill="#5fa6d7"/>
<!-- facebook -->
<rect x="699" y="936" width="38" height="40" fill="#3d5a9e"/><text x="719" y="976" font-size="40" font-weight="bold" text-anchor="middle" fill="#fff">f</text>
<!-- corel -->
<rect x="757" y="933" width="66" height="47" rx="3" fill="url(#act)" stroke="#dcebf5"/>
<path d="M773 941H806V955C806 966 795 973 789 975C782 973 773 966 773 955Z" fill="#7cb342"/><path d="M778 941L796 965M787 941L802 959" stroke="#f3f3f3" stroke-width="4"/>
<path d="M825.500 933V980" stroke="#a9cde6" stroke-width="1.500"/>
<!-- tray -->
<text x="1281" y="958" font-size="14" text-anchor="middle" fill="#e8f1f8" textLength="14" lengthAdjust="spacingAndGlyphs">IN</text>
<polygon points="1310,960 1319,960 1314.500,955" fill="#eef4f9"/>
<rect x="1337" y="949" width="12" height="15" rx="1" fill="#123d66" stroke="#fff" stroke-width="1.600"/><path d="M1349 955H1352V966M1345 949V945M1349 949V945" stroke="#fff" stroke-width="1.800" fill="none"/>
<path d="M1369 953H1373L1378 948V966L1373 961H1369Z" fill="#e8eef3"/><path d="M1381 952Q1384 957 1381 962" stroke="#e8eef3" fill="none"/>
<g fill="#f3f6f9"><rect x="1396" y="961" width="2" height="3"/><rect x="1399.500" y="959" width="2" height="5"/><rect x="1403" y="956" width="2" height="8"/><rect x="1406.500" y="953" width="2" height="11"/><rect x="1410" y="950" width="2" height="14"/></g>
<path d="M1427 948V965" stroke="#fff" stroke-width="2"/><path d="M1428 948H1437V958H1428Z" fill="#dfe7ee"/><circle cx="1437" cy="961" r="5" fill="#d13438"/><path d="M1435 959L1439 963M1439 959L1435 963" stroke="#fff"/>
<text x="1500" y="951" font-size="14.500" text-anchor="middle" fill="#f0f5f9" textLength="26" lengthAdjust="spacingAndGlyphs">9:58</text>
<text x="1500" y="973" font-size="14.500" text-anchor="middle" fill="#f0f5f9" textLength="71" lengthAdjust="spacingAndGlyphs">20/12/2018</text>
<rect x="1552" y="934" width="16" height="46" fill="#2a6aa4" stroke="#6f9bc4"/>
</g>
</svg>
</body></html>
